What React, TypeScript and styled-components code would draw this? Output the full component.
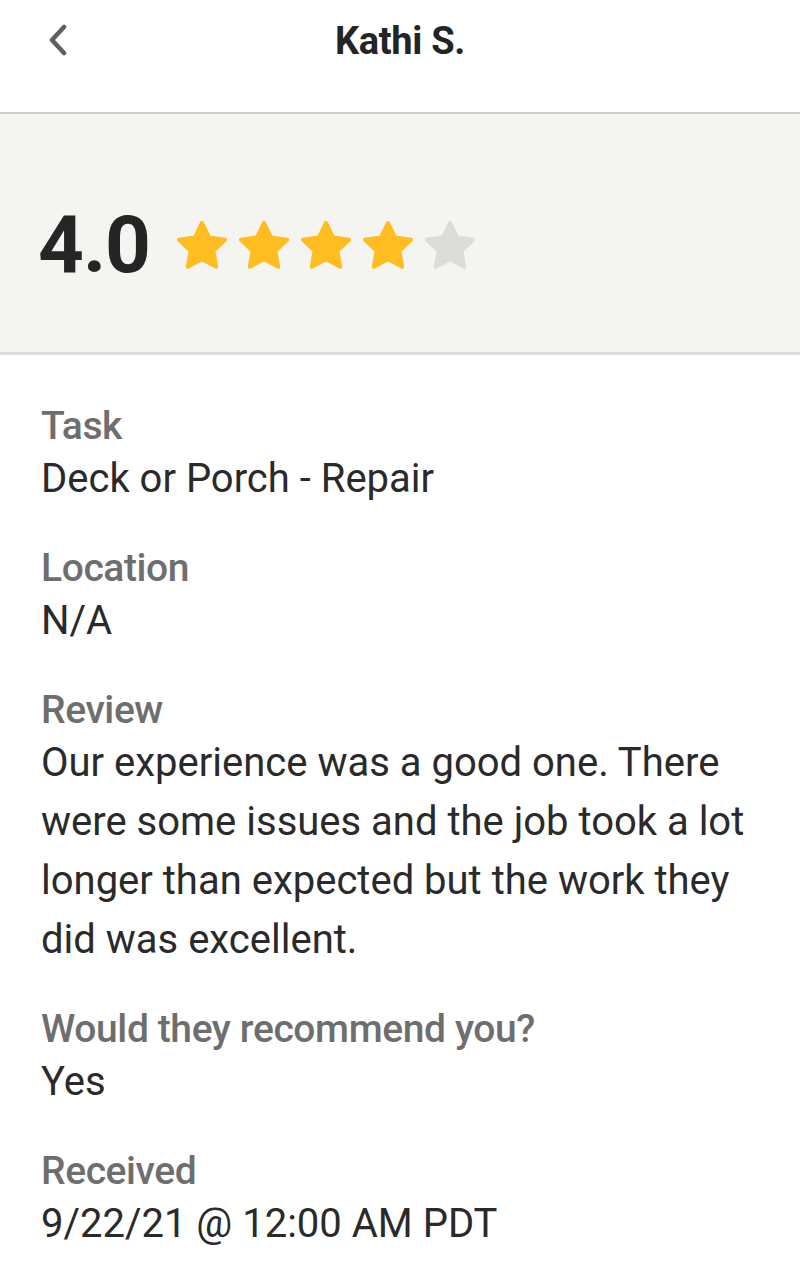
import React from "react";
import styled, { createGlobalStyle } from "styled-components";

const GlobalStyle = createGlobalStyle`
  html, body {
    margin: 0;
    padding: 0;
    background: #ffffff;
  }
  body {
    font-family: Roboto, "Noto Sans", Arial, sans-serif;
    -webkit-font-smoothing: antialiased;
  }
`;

const Page = styled.div`
  width: 800px;
  min-height: 1265px;
  background: #ffffff;
  display: flex;
  flex-direction: column;
`;

const Header = styled.header`
  height: 112px;
  display: grid;
  grid-template-columns: 100px 1fr 100px;
  align-items: start;
  border-bottom: 2px solid #cdcdcd;
`;

const BackButton = styled.button`
  height: 80px;
  width: 100px;
  border: none;
  background: none;
  padding: 0 0 0 47px;
  display: flex;
  align-items: center;
  cursor: pointer;
`;

const Title = styled.h1`
  margin: 0;
  text-align: center;
  font-size: 38px;
  line-height: 82px;
  font-weight: 700;
  color: #242424;
  letter-spacing: -0.3px;
`;

const RatingPanel = styled.section`
  height: 241px;
  background: #f4f4f1;
  border-bottom: 3px solid #dcdcda;
  box-sizing: border-box;
  display: flex;
  align-items: center;
  gap: 27px;
  padding: 24px 0 0 38px;
`;

const Score = styled.span`
  font-size: 80px;
  font-weight: 700;
  color: #252525;
  letter-spacing: -1px;
  line-height: 80px;
`;

const Stars = styled.div`
  display: flex;
  gap: 12px;
`;

const Body = styled.main`
  display: flex;
  flex-direction: column;
  gap: 38px;
  padding: 49px 28px 0 41px;
`;

const Field = styled.div`
  display: flex;
  flex-direction: column;
`;

const Label = styled.div`
  font-size: 39px;
  line-height: 45px;
  font-weight: 500;
  color: #6e6e6e;
  letter-spacing: -0.4px;
`;

const Value = styled.div`
  font-size: 40px;
  line-height: 59px;
  font-weight: 400;
  color: #2a2a2a;
`;

const Chevron = () => (
  <svg width="22" height="32" viewBox="0 0 22 32" aria-hidden>
    <path
      d="M17 3 L5 16 L17 29"
      fill="none"
      stroke="#5f5f5f"
      strokeWidth="4.5"
      strokeLinecap="round"
      strokeLinejoin="round"
    />
  </svg>
);

const Star = ({ filled }: { filled: boolean }) => (
  <svg width="50" height="48" viewBox="0 0 50 48" aria-hidden>
    <path
      d="M25 2 L32.05 16.49 L48.02 18.72 L36.41 29.91 L39.22 45.78 L25 38.2 L10.78 45.78 L13.59 29.91 L1.98 18.72 L17.95 16.49 Z"
      fill={filled ? "#ffbd21" : "#dcdcd8"}
      stroke={filled ? "#ffbd21" : "#dcdcd8"}
      strokeWidth="4"
      strokeLinejoin="round"
    />
  </svg>
);

const fields = [
  { label: "Task", value: "Deck or Porch - Repair" },
  { label: "Location", value: "N/A" },
  {
    label: "Review",
    value:
      "Our experience was a good one. There were some issues and the job took a lot longer than expected but the work they did was excellent.",
  },
  { label: "Would they recommend you?", value: "Yes" },
  { label: "Received", value: "9/22/21 @ 12:00 AM PDT" },
];

export default function App() {
  const rating = 4;
  return (
    <Page>
      <GlobalStyle />
      <Header>
        <BackButton aria-label="Back">
          <Chevron />
        </BackButton>
        <Title>Kathi S.</Title>
        <div />
      </Header>
      <RatingPanel>
        <Score>4.0</Score>
        <Stars>
          {[1, 2, 3, 4, 5].map((i) => (
            <Star key={i} filled={i <= rating} />
          ))}
        </Stars>
      </RatingPanel>
      <Body>
        {fields.map((f) => (
          <Field key={f.label}>
            <Label>{f.label}</Label>
            <Value>{f.value}</Value>
          </Field>
        ))}
      </Body>
    </Page>
  );
}
